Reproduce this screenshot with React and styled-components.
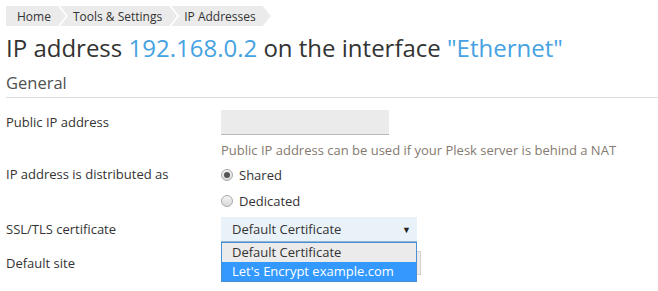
import React from 'react'
import styled, { createGlobalStyle } from 'styled-components'

const GlobalStyle = createGlobalStyle`
  body {
    margin: 0;
    font-family: "Open Sans", "Liberation Sans", sans-serif;
    color: #333;
    background: #fff;
  }
`

const Page = styled.div`
  padding: 6px 0 0 6px;
  width: 652px;
  height: 285px;
  overflow: hidden;
`

const Crumbs = styled.nav`
  display: flex;
  height: 20px;
`

const Crumb = styled.div`
  display: flex;
  align-items: center;
  height: 20px;
  font-size: 12px;
  color: #333;
  background: #ebebeb;
  padding: 0 15px 0 ${p => (p.$first ? '11px' : '13px')};
  margin-left: ${p => (p.$first ? '0' : '-6px')};
  clip-path: ${p =>
    p.$first
      ? 'polygon(0 0, calc(100% - 8px) 0, 100% 50%, calc(100% - 8px) 100%, 0 100%)'
      : 'polygon(0 0, calc(100% - 8px) 0, 100% 50%, calc(100% - 8px) 100%, 0 100%, 8px 50%)'};
`

const Title = styled.h1`
  margin: 5px 0 0;
  font-size: 24px;
  font-weight: 400;
  line-height: 34px;
  color: #333;
`

const Accent = styled.span`
  color: #46a2e2;
`

const Section = styled.h2`
  margin: 7px 0 0;
  padding-bottom: 3px;
  font-size: 16.5px;
  font-weight: 400;
  line-height: 22px;
  color: #505050;
  border-bottom: 1px solid #dcdcdc;
`

const Form = styled.div`
  padding-top: 12px;
`

const Row = styled.div`
  display: grid;
  grid-template-columns: 215px 1fr;
  align-items: start;
  margin-bottom: ${p => p.$gap || '0'};
`

const Label = styled.div`
  font-size: 13px;
  line-height: 18px;
  padding-top: 3px;
  color: #333;
`

const Field = styled.div`
  position: relative;
  display: flex;
  flex-direction: column;
`

const TextInput = styled.div`
  width: 168px;
  height: 24px;
  background: #ebebeb;
  border-bottom: 1px solid #b8b8b8;
`

const Hint = styled.div`
  margin-top: 6px;
  font-size: 13px;
  line-height: 18px;
  color: #857a70;
`

const RadioLine = styled.label`
  display: flex;
  align-items: center;
  gap: 6px;
  height: 26px;
  font-size: 13px;
  color: #333;
`

const RadioDot = styled.span`
  width: 12px;
  height: 12px;
  border-radius: 50%;
  box-sizing: border-box;
  border: 1px solid #a9a9a9;
  background: linear-gradient(#f4f4f4, #d9d9d9);
  display: flex;
  align-items: center;
  justify-content: center;

  &::after {
    content: '';
    width: 6px;
    height: 6px;
    border-radius: 50%;
    background: ${p => (p.$checked ? '#555' : 'transparent')};
  }
`

const Select = styled.div`
  display: flex;
  align-items: center;
  justify-content: space-between;
  width: 196px;
  height: 25px;
  box-sizing: border-box;
  padding: 0 6px 0 11px;
  background: #eaf2f9;
  border-bottom: 1px solid #8fb5d6;
  font-size: 13px;
  color: #333;
`

const Caret = styled.span`
  font-size: 9px;
  color: #222;
`

const Options = styled.ul`
  position: absolute;
  top: 25px;
  left: 0;
  z-index: 2;
  width: 196px;
  box-sizing: border-box;
  margin: 0;
  padding: 0;
  list-style: none;
  border: 1px solid #4a8fd4;
  background: #fff;
`

const Option = styled.li`
  height: 19px;
  line-height: 19px;
  padding-left: 10px;
  font-size: 13px;
  color: ${p => (p.$active ? '#fff' : '#333')};
  background: ${p => (p.$active ? '#3399ff' : '#ebebeb')};
`

const SiteInput = styled.div`
  width: 200px;
  height: 24px;
  box-sizing: border-box;
  background: #ebebeb;
  border: 1px solid #d2d2d2;
`

export default function App() {
  return (
    <Page>
      <GlobalStyle />
      <Crumbs>
        <Crumb $first>Home</Crumb>
        <Crumb>Tools &amp; Settings</Crumb>
        <Crumb>IP Addresses</Crumb>
      </Crumbs>
      <Title>
        IP address <Accent>192.168.0.2</Accent> on the interface <Accent>"Ethernet"</Accent>
      </Title>
      <Section>General</Section>
      <Form>
        <Row $gap="3px">
          <Label>Public IP address</Label>
          <Field>
            <TextInput />
            <Hint>Public IP address can be used if your Plesk server is behind a NAT</Hint>
          </Field>
        </Row>
        <Row $gap="3px">
          <Label>IP address is distributed as</Label>
          <Field>
            <RadioLine>
              <RadioDot $checked />
              Shared
            </RadioLine>
            <RadioLine>
              <RadioDot />
              Dedicated
            </RadioLine>
          </Field>
        </Row>
        <Row $gap="9px">
          <Label>SSL/TLS certificate</Label>
          <Field>
            <Select>
              Default Certificate
              <Caret>▼</Caret>
            </Select>
            <Options>
              <Option>Default Certificate</Option>
              <Option $active>Let's Encrypt example.com</Option>
            </Options>
          </Field>
        </Row>
        <Row>
          <Label>Default site</Label>
          <Field>
            <SiteInput />
          </Field>
        </Row>
      </Form>
    </Page>
  )
}
